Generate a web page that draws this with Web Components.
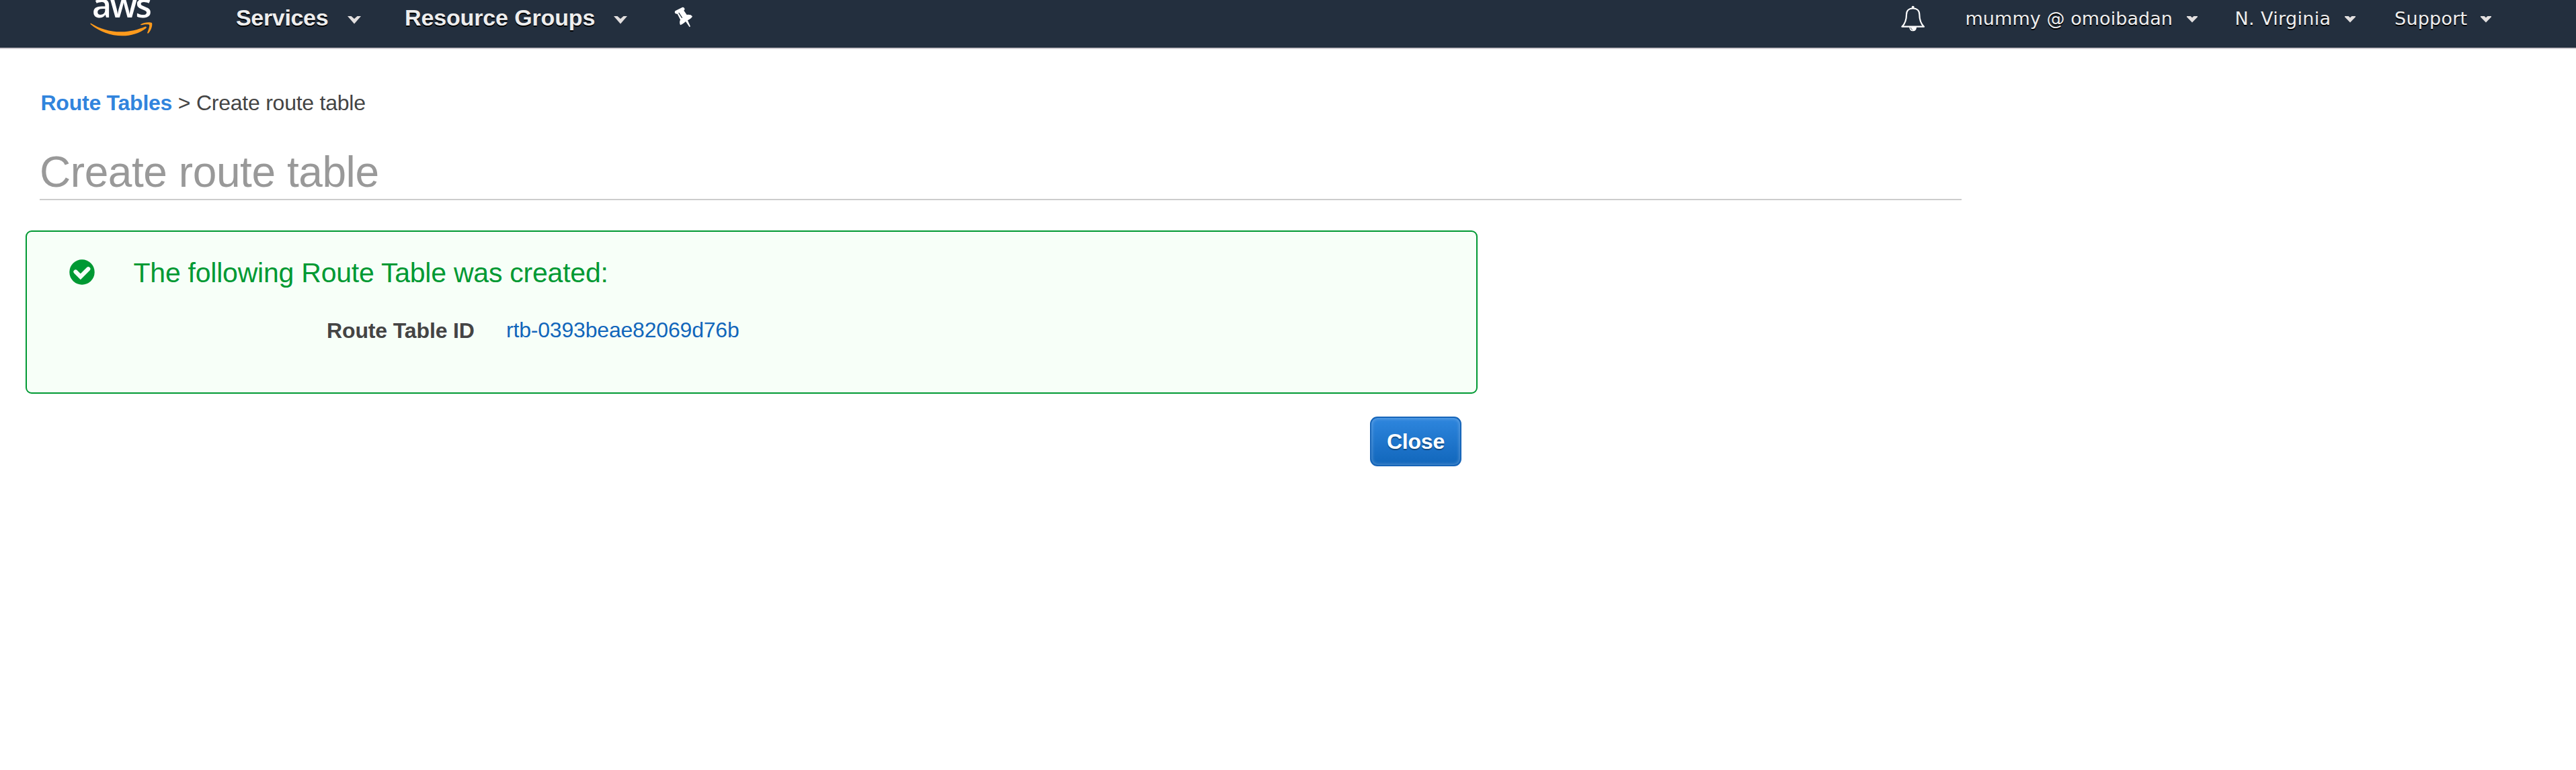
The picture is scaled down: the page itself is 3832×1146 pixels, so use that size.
<!DOCTYPE html>
<html lang="en">
<head>
<meta charset="utf-8">
<title>Create route table</title>
<style>
html, body { margin: 0; background: #fff; }
body { font-family: "Liberation Sans", Arial, sans-serif; color: #444; }
</style>
</head>
<body>
<console-page></console-page>
<script>
function define(name, html) {
  const template = document.createElement('template');
  template.innerHTML = html;
  customElements.define(name, class extends HTMLElement {
    constructor() {
      super();
      this.attachShadow({ mode: 'open' }).append(template.content.cloneNode(true));
    }
  });
}

define('aws-logo', `
<style>
:host { display: block; width: 95px; height: 71px; overflow: hidden; }
.word { display: block; margin: -18px 0 0 3px; height: 50px; font: 600 50px/50px "Open Sans", sans-serif; letter-spacing: -2.6px; color: #fff; }
svg { display: block; width: 93.3px; height: 21.7px; }
</style>
<span class="word">aws</span>
<svg viewBox="20 95 280 65">
  <path fill="#ff9a1c" d="M24 103C64 128 112 142 160 141C198 140 232 132 265 118Q274 116 271 124C240 148 202 159 164 159C112 159 60 140 22 107Q20 102 24 103Z"/>
  <path fill="#ff9a1c" d="M246 108C258 98 288 96 296 101C300 112 292 138 279 148Q275 149 276 144C281 132 287 115 284 110C278 106 260 109 249 111Q244 111 246 108Z"/>
</svg>`);

define('nav-menu', `
<style>
:host { display: flex; align-items: flex-start; box-sizing: border-box; height: 71px; padding-top: 6px;
  font: bold 34px/40px "Liberation Sans", Arial, sans-serif; color: #eee; text-shadow: 0 2px 0 #000; white-space: nowrap; }
:host([small]) { padding-top: 8px; font: 27px/40px "DejaVu Sans", Verdana, sans-serif; }
.label { width: var(--label); }
svg { display: block; width: 20px; height: 12px; margin-top: 18px; }
:host([small]) svg { width: 16px; height: 10px; margin-top: 16px; }
.small { display: none; }
:host([small]) .small { display: inline; }
:host([small]) .large { display: none; }
</style>
<span class="label"><slot></slot></span>
<svg viewBox="0 0 20 12" preserveAspectRatio="none">
  <path class="large" fill="#e2dfdf" d="M0 0H5.5L10 4L14.5 0H20L10 11.5Z"/>
  <path class="small" fill="#e2dfdf" d="M0 0H7L10 2.6L13 0H20V1.4L10 11.5L0 1.4Z"/>
</svg>`);

define('pin-icon', `
<style>
:host { display: block; width: 28px; height: 31.3px; }
svg { display: block; width: 100%; height: 100%; }
</style>
<svg viewBox="24 30 84 94">
  <path fill="#fff" d="M28 49L61 32Q70 32 71 41L67 47L80 66Q98 64 105 73Q102 82 84 91L96 118L92 121L75 96Q64 106 52 112Q45 104 51 88L38 62Q27 63 26 54Z"/>
  <path fill="none" stroke="#232f3e" stroke-width="4" d="M44 57L59 80"/>
</svg>`);

define('bell-icon', `
<style>
:host { display: block; width: 36px; height: 40.7px; }
svg { display: block; width: 100%; height: 100%; }
</style>
<svg viewBox="24 20 108 122">
  <circle cx="77" cy="31" r="6" fill="#fff"/>
  <path fill="none" stroke="#fff" stroke-width="6.5" stroke-linejoin="round" d="M28 118C42 104 48 88 48 64C48 46 60 36 77 36C94 36 106 46 106 64C106 88 112 104 126 118Z"/>
  <path fill="#fff" d="M61 119H93C93 132 87 138 77 138C67 138 61 131 61 119Z"/>
  <path fill="none" stroke="#232f3e" stroke-width="2.5" d="M67 122Q68 130 75 133"/>
</svg>`);

define('console-header', `
<style>
:host { display: flex; align-items: flex-start; box-sizing: border-box; height: 73px; padding: 0 126px 0 134px; background: #232f3e; border-bottom: 2px solid #cfcacf; }
aws-logo { margin-right: 122px; }
.services { --label: 166px; letter-spacing: -.33px; }
.groups { --label: 311px; letter-spacing: -.14px; margin-left: 65px; }
pin-icon { margin: 10px 0 0 70px; }
.right { display: flex; align-items: flex-start; margin-left: auto; }
bell-icon { margin: 6.7px 59.5px 0 0; }
.user { --label: 329px; letter-spacing: .06px; }
.region { --label: 163.5px; letter-spacing: .35px; margin-left: 56px; }
.support { --label: 128px; letter-spacing: .24px; margin-left: 58px; }
</style>
<aws-logo></aws-logo>
<nav-menu class="services">Services</nav-menu>
<nav-menu class="groups">Resource Groups</nav-menu>
<pin-icon></pin-icon>
<div class="right">
  <bell-icon></bell-icon>
  <nav-menu small class="user">mummy @ omoibadan</nav-menu>
  <nav-menu small class="region">N. Virginia</nav-menu>
  <nav-menu small class="support">Support</nav-menu>
</div>`);

define('bread-crumb', `
<style>
:host { display: block; font-size: 32px; line-height: 40px; letter-spacing: -.24px; white-space: nowrap; color: #444; }
::slotted(a) { font-weight: bold; color: #3184dd; text-decoration: none; }
</style>
<slot></slot>`);

define('page-title', `
<style>
:host { display: block; box-sizing: border-box; border-bottom: 2px solid #ccc; }
h1 { margin: 0; font-size: 64px; line-height: 72px; font-weight: normal; letter-spacing: -.43px; color: #999; }
</style>
<h1><slot></slot></h1>`);

define('success-panel', `
<style>
:host { display: flex; align-items: flex-start; box-sizing: border-box; width: 2160px; height: 243px; padding: 37px 63px;
  border: 2px solid #093; border-radius: 9px; background: #f7fff8; }
svg { display: block; width: 38px; height: 38px; margin: 4px 57.5px 0 0; }
h2 { margin: 0; font-size: 41px; line-height: 48px; font-weight: normal; letter-spacing: -.23px; color: #093; white-space: nowrap; }
</style>
<svg viewBox="0 0 38 38">
  <circle cx="19" cy="19" r="18.7" fill="#093"/>
  <path fill="none" stroke="#f7fff8" stroke-width="6.2" stroke-linecap="round" stroke-linejoin="miter" d="M9.5 18.5L16.8 25.8L28.3 14.2"/>
</svg>
<div><h2><slot name="title"></slot></h2><slot></slot></div>`);

define('detail-row', `
<style>
:host { display: flex; align-items: flex-start; font-size: 32px; line-height: 40px; white-space: nowrap; }
.label { width: 267px; font-weight: bold; letter-spacing: -.13px; color: #444; padding-top: 1px; }
::slotted(a) { color: #16b; letter-spacing: -.19px; text-decoration: none; }
</style>
<span class="label"><slot name="label"></slot></span><slot></slot>`);

define('primary-button', `
<style>
:host { display: block; }
button { display: block; box-sizing: border-box; width: 136px; height: 74px; margin: 0; padding: 0; border: 2px solid #1564b8; border-radius: 11px;
  background: linear-gradient(#2e86de, #1166bb); box-shadow: inset 0 0 5px 1px rgba(255,255,255,.28);
  font: bold 32px/40px "Liberation Sans", Arial, sans-serif; letter-spacing: -.2px; color: #fff; text-shadow: 0 2px 1px rgba(0,0,0,.35); }
</style>
<button type="button"><slot></slot></button>`);

define('console-page', `
<style>
:host { display: block; height: 1146px; overflow: hidden; }
bread-crumb { margin: 60px 0 0 60.5px; }
page-title { width: 2859px; margin: 47px 0 0 59px; padding: 0 0 4px; }
success-panel { margin: 45px 0 0 38px; }
detail-row { margin: 41px 0 0 287.5px; }
.actions { display: flex; justify-content: flex-end; width: 2174px; margin-top: 34px; }
</style>
<console-header></console-header>
<bread-crumb><a>Route Tables</a> &gt; Create route table</bread-crumb>
<page-title>Create route table</page-title>
<success-panel>
  <span slot="title">The following Route Table was created:</span>
  <detail-row><span slot="label">Route Table ID</span><a>rtb-0393beae82069d76b</a></detail-row>
</success-panel>
<div class="actions"><primary-button>Close</primary-button></div>`);
</script>
</body>
</html>
